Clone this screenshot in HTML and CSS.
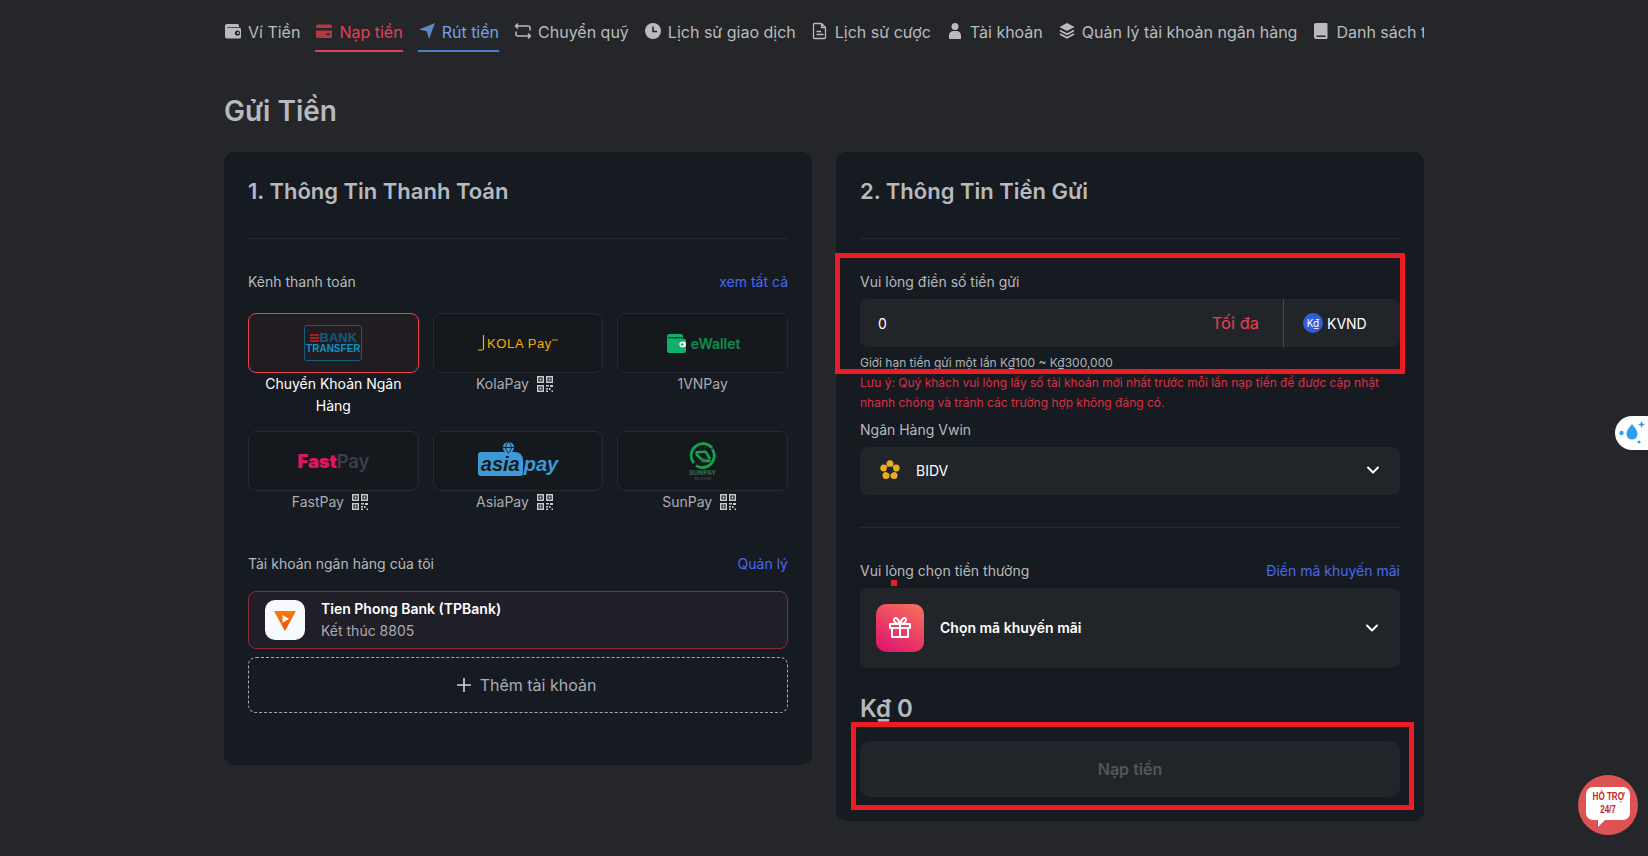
FILE: index.html
```html
<!DOCTYPE html>
<html lang="vi">
<head>
<meta charset="utf-8">
<title>Gửi Tiền</title>
<link rel="stylesheet" href="styles.css">
</head>
<body>
<svg class="defs" width="0" height="0" aria-hidden="true">
  <symbol id="qr" viewBox="0 0 16 16">
    <path fill="none" stroke="currentColor" stroke-width="1.4" d="M.7.7h5.6v5.6H.7zM9.7.7h5.6v5.6H9.7zM.7 9.7h5.6v5.6H.7z"/>
    <path fill="currentColor" d="M2.5 2.5h2v2h-2zM11.5 2.5h2v2h-2zM2.5 11.5h2v2h-2zM9 9h3v1.5H9zM13 9h3v2h-3zM9 12h2v1.5H9zM12 12h1.500v2H12zM9 14.500h2V16H9zM14.500 14.500H16V16h-1.500z"/>
  </symbol>
  <symbol id="chev" viewBox="0 0 14 14">
    <path fill="none" stroke="currentColor" stroke-width="2" stroke-linecap="round" stroke-linejoin="round" d="M2 4.500l5 5 5-5"/>
  </symbol>
</svg>
<div class="page">
  <nav class="tabs">
    <a class="tab"><svg class="ti" viewBox="0 0 18 18"><path fill="currentColor" d="M3 2h10.500A1.500 1.500 0 0 1 15 3.500V5H3.200v.8H15.500A1.500 1.500 0 0 1 17 7.300V15a1.500 1.500 0 0 1-1.500 1.500H3A2 2 0 0 1 1 14.500V4a2 2 0 0 1 2-2z"/><circle cx="13.500" cy="11" r="2.600" fill="#25262a"/><circle cx="14" cy="11" r="1.100" fill="currentColor"/></svg>Ví Tiền</a>
    <a class="tab tab-red"><svg class="ti" viewBox="0 0 18 18"><path fill="currentColor" opacity=".72" d="M2.500 2.500h13A1.500 1.500 0 0 1 17 4v10.500a1.500 1.500 0 0 1-1.500 1.500h-13A1.500 1.500 0 0 1 1 14.500V4a1.500 1.500 0 0 1 1.500-1.500zM1 6v2.500h16V6zm10 5.500V13h4v-1.500z" fill-rule="evenodd"/></svg>Nạp tiền</a>
    <a class="tab tab-blue"><svg class="ti" viewBox="0 0 18 18"><path fill="currentColor" opacity=".8" d="M17 1L11 17 8.800 9.200 1 7.500z"/></svg>Rút tiền</a>
    <a class="tab"><svg class="ti" viewBox="0 0 18 18"><path fill="none" stroke="currentColor" stroke-width="1.500" stroke-linejoin="round" d="M4 1.500L1.500 4 4 6.500M1.500 4H14a2 2 0 0 1 2 2v2.500M14 16.500l2.500-2.500L14 11.500M16.500 14H4a2 2 0 0 1-2-2V9.500"/></svg>Chuyển quỹ</a>
    <a class="tab"><svg class="ti" viewBox="0 0 18 18"><circle cx="9" cy="9" r="8" fill="currentColor"/><path fill="none" stroke="#25262a" stroke-width="1.600" d="M9 4.500V9.500H13"/></svg>Lịch sử giao dịch</a>
    <a class="tab"><svg class="ti" viewBox="0 0 18 18"><path fill="none" stroke="currentColor" stroke-width="1.300" stroke-linejoin="round" d="M3.500 1.500h7l4 4v10a1 1 0 0 1-1 1h-10a1 1 0 0 1-1-1v-13a1 1 0 0 1 1-1zM10.500 1.500v4h4M5.500 9.500H10M5.500 12.500h7"/></svg>Lịch sử cược</a>
    <a class="tab"><svg class="ti" viewBox="0 0 18 18"><circle cx="9" cy="4.500" r="3.500" fill="currentColor"/><path fill="currentColor" d="M3 17v-3.500A4.500 4.500 0 0 1 7.500 9h3a4.500 4.500 0 0 1 4.500 4.500V17z"/></svg>Tài khoản</a>
    <a class="tab"><svg class="ti" viewBox="0 0 18 18"><path fill="currentColor" d="M9 1l7.500 4L9 9 1.500 5z"/><path fill="none" stroke="currentColor" stroke-width="1.800" d="M2 8.500l7 3.800 7-3.800M2 12l7 3.800 7-3.800"/></svg>Quản lý tài khoản ngân hàng</a>
    <a class="tab"><svg class="ti" viewBox="0 0 18 18"><path fill="currentColor" fill-rule="evenodd" d="M4 1h10.500a1 1 0 0 1 1 1v14a1 1 0 0 1-1 1H4a2 2 0 0 1-2-2V3a2 2 0 0 1 2-2zM4.500 13.500V15H13.500v-1.500z"/></svg>Danh sách thẻ</a>
  </nav>

  <h1 class="title">Gửi Tiền</h1>

  <div class="columns">
    <section class="card card-left">
      <h2 class="card-title">1. Thông Tin Thanh Toán</h2>
      <div class="rule"></div>

      <div class="label-row channel-head">
        <span>Kênh thanh toán</span><a class="link">xem tất cả</a>
      </div>

      <div class="channels">
        <div class="channel active">
          <div class="tile">
            <div class="logo-bank">
              <div class="bank-top"><span class="bars"><i></i><i></i><i></i></span><span class="bank-word">BANK</span></div>
              <span class="bank-sub">TRANSFER</span>
            </div>
          </div>
          <div class="cap">Chuyển Khoản Ngân Hàng</div>
        </div>
        <div class="channel">
          <div class="tile logo-kola">
            <svg class="kola-j" viewBox="0 0 8 16"><path fill="none" stroke="#f5ad00" stroke-width="1.200" d="M5.500 0v13.500a1.500 1.500 0 0 1-1.500 1.500H0"/></svg>
            <span>KOLA Pay</span>
            <svg class="kola-t" viewBox="0 0 8 4"><path fill="none" stroke="#f5ad00" stroke-width="1.200" d="M0 2h8"/></svg>
          </div>
          <div class="cap">KolaPay<svg class="qr"><use href="#qr"/></svg></div>
        </div>
        <div class="channel">
          <div class="tile logo-wallet">
            <svg class="wallet-ic" viewBox="0 0 20 20"><path fill="#0fb16a" d="M3 0h11a3 3 0 0 1 3 3v2h1a2 2 0 0 1 2 2v10a3 3 0 0 1-3 3H3a3 3 0 0 1-3-3V3a3 3 0 0 1 3-3z"/><path fill="none" stroke="#14191c" stroke-width="1" d="M1 4h16"/><rect x="13" y="8" width="7" height="6" rx="3" fill="#e9fff4"/><circle cx="16" cy="11" r="1.300" fill="#0fb16a"/></svg>
            <span>eWallet</span>
          </div>
          <div class="cap">1VNPay</div>
        </div>
        <div class="channel">
          <div class="tile"><span class="logo-fast"><b>Fast</b><span>Pay</span></span></div>
          <div class="cap">FastPay<svg class="qr"><use href="#qr"/></svg></div>
        </div>
        <div class="channel">
          <div class="tile">
            <div class="logo-asia">
              <svg class="asia-globe" viewBox="0 0 14 14"><circle cx="7" cy="7" r="6" fill="#3e9ad6"/><path fill="none" stroke="#14191c" d="M1 7h12M7 1c-4 4-4 8 0 12M7 1c4 4 4 8 0 12"/></svg>
              <span class="asia-a">asia</span><span class="asia-b">pay</span>
            </div>
          </div>
          <div class="cap">AsiaPay<svg class="qr"><use href="#qr"/></svg></div>
        </div>
        <div class="channel">
          <div class="tile logo-sun">
            <svg class="sun-ic" viewBox="0 0 26 26"><path fill="none" stroke="#12a44a" stroke-width="2.600" d="M4.500 19.500A11 11 0 0 1 21.500 5.500M21.500 6.500A11 11 0 0 1 6.500 22"/><path fill="none" stroke="#12a44a" stroke-width="2.400" stroke-linecap="round" d="M7 9.500l6.500-.5a3 3 0 0 1 3 1.500l2.500 4.500M7 11.500l6 6h6"/><circle cx="13.500" cy="17" r="2" fill="#3d6b50"/></svg>
            <span class="sun-t">SUNPAY</span>
            <span class="sun-s">SOLUTIONS</span>
          </div>
          <div class="cap">SunPay<svg class="qr"><use href="#qr"/></svg></div>
        </div>
      </div>

      <div class="label-row bank-head">
        <span>Tài khoản ngân hàng của tôi</span><a class="link">Quản lý</a>
      </div>
      <div class="bank-row">
        <div class="bank-logo">
          <svg viewBox="0 0 24 24" width="24" height="24"><defs><linearGradient id="tp" x1="0" y1="0" x2="0" y2="1"><stop offset="0" stop-color="#ff7a00"/><stop offset="1" stop-color="#f04e0f"/></linearGradient></defs><path fill="url(#tp)" d="M1 3h22L12 23z"/><path fill="#fff" d="M9.500 7l6.500 3.800-6.500 4z"/></svg>
        </div>
        <div class="bank-text">
          <div class="bank-name">Tien Phong Bank (TPBank)</div>
          <div class="bank-num">Kết thúc 8805</div>
        </div>
      </div>
      <div class="add-row"><svg class="plus" viewBox="0 0 16 16"><path stroke="currentColor" stroke-width="1.600" d="M8 1v14M1 8h14"/></svg>Thêm tài khoản</div>
    </section>

    <section class="card card-right">
      <h2 class="card-title">2. Thông Tin Tiền Gửi</h2>
      <div class="rule"></div>

      <div class="label amount-label">Vui lòng điền số tiền gửi</div>
      <div class="amount">
        <span class="amount-val">0</span>
        <span class="amount-max">Tối đa</span>
        <span class="amount-cur"><span class="coin">K₫</span>KVND</span>
      </div>
      <div class="limit">Giới hạn tiền gửi một lần K₫100 ~ K₫300,000</div>
      <div class="note">Lưu ý: Quý khách vui lòng lấy số tài khoản mới nhất trước mỗi lần nạp tiền để được cập nhật nhanh chóng và tránh các trường hợp không đáng có.</div>

      <div class="label vwin-label">Ngân Hàng Vwin</div>
      <div class="select">
        <svg class="bidv" viewBox="0 0 20 20"><g fill="#e9ac1c"><circle cx="10" cy="3.800" r="3.500"/><circle cx="16.200" cy="8" r="3.500"/><circle cx="14" cy="15.500" r="3.500"/><circle cx="6" cy="15.500" r="3.500"/><circle cx="3.800" cy="8" r="3.500"/></g><circle cx="10" cy="10" r="3.600" fill="#212529"/></svg>
        <span class="select-t">BIDV</span>
        <svg class="chev"><use href="#chev"/></svg>
      </div>

      <div class="rule rule-mid"></div>

      <div class="label-row promo-head">
        <span>Vui lòng chọn tiền thưởng</span><a class="link">Điền mã khuyến mãi</a>
      </div>
      <div class="promo">
        <div class="gift">
          <svg viewBox="0 0 24 24" width="24" height="24"><path fill="none" stroke="#fff" stroke-width="2" stroke-linejoin="round" d="M2 8h20v4H2zM4 12v9h16v-9M12 8v13M4 12h16M12 8c-2 0-6-1-6-4 0-3 4-3 6 4 2-7 6-7 6-4 0 3-4 4-6 4z"/></svg>
        </div>
        <span class="promo-t">Chọn mã khuyến mãi</span>
        <svg class="chev"><use href="#chev"/></svg>
      </div>

      <div class="total">K₫ 0</div>
      <button class="submit" type="button">Nạp tiền</button>

      <div class="mark mark-amount"></div>
      <div class="mark mark-submit"></div>
      <div class="dot"></div>
    </section>
  </div>
</div>

<div class="side-btn">
  <svg viewBox="0 0 30 26" width="30" height="26"><g fill="#2a9df4"><path d="M15 4c3 4 5.500 6.500 5.500 10a5.500 5.500 0 0 1-11 0C9.500 10.500 12 8 15 4z"/><path d="M24.500 1l1 2.500L28 4.500l-2.500 1-1 2.500-1-2.500L21 4.500l2.500-1z"/><circle cx="4.500" cy="13" r="2.200"/><circle cx="22" cy="22" r="1.500"/></g></svg>
</div>
<div class="support">
  <div class="bubble"><span class="bubble-t">HỖ TRỢ<br>24/7</span></div>
</div>
</body>
</html>
```
FILE: styles.css
```css
* { box-sizing: border-box; }
html, body { margin: 0; height: 100%; }
body {
  background: #25262a;
  color: #b7b9bd;
  font-family: Inter, "Noto Sans", sans-serif;
  font-size: 14px;
  overflow: hidden;
  position: relative;
}
.defs { position: absolute; }
.page { width: 1200px; margin: 0 auto; }

.tabs {
  display: flex;
  gap: 15px;
  height: 52px;
  padding-top: 20px;
  overflow: hidden;
  white-space: nowrap;
  font-size: 16px;
}
.tab {
  display: flex;
  align-items: flex-start;
  gap: 6px;
  flex: none;
  height: 32px;
  line-height: 24px;
  color: #b9bbbe;
}
.ti { width: 18px; height: 18px; margin-top: 2px; flex: none; }
.tab-red { color: #e8404f; border-bottom: 2px solid #e8404f; }
.tab-blue { color: #6ea2ec; border-bottom: 2px solid #4a7fc9; }

.title {
  margin: 42px 0 24px;
  font-size: 28px;
  line-height: 34px;
  font-weight: 600;
  color: #b7b9bd;
}

.columns {
  display: grid;
  grid-template-columns: 588px 588px;
  gap: 24px;
  align-items: start;
}
.card {
  position: relative;
  background: #161b22;
  border-radius: 10px;
  padding: 24px;
}
.card-left { height: 613px; }
.card-right { height: 669px; }
.card-title {
  margin: 0;
  font-size: 22px;
  line-height: 30px;
  font-weight: 600;
  color: #b7b9bd;
}
.rule { height: 1px; background: #252a31; margin-top: 32px; }

.label-row {
  display: flex;
  justify-content: space-between;
  line-height: 20px;
}
.link { color: #4a68f0; }
.channel-head { margin-top: 33px; }

.channels {
  display: grid;
  grid-template-columns: repeat(3, 1fr);
  column-gap: 14px;
  row-gap: 14px;
  margin-top: 21px;
}
.tile {
  height: 60px;
  background: #15191e;
  border: 1px solid #262a31;
  border-radius: 8px;
  display: flex;
  align-items: center;
  justify-content: center;
}
.channel.active .tile { background: #201c22; border-color: #e8404f; }
.cap {
  text-align: center;
  line-height: 22px;
  padding: 0 10px;
  color: #a9acb1;
}
.channel.active .cap { color: #fff; }
.qr { width: 16px; height: 16px; margin: 0 7px 0 8px; vertical-align: -3px; color: #c9cbce; }

.logo-bank {
  width: 58px;
  height: 36px;
  border: 1px solid #0f5f7d;
  border-radius: 3px;
  display: flex;
  flex-direction: column;
  align-items: center;
  justify-content: center;
  font-family: "Liberation Sans", sans-serif;
  font-weight: 700;
  line-height: 1;
}
.bank-top { display: flex; align-items: center; gap: 1px; }
.bars { display: flex; flex-direction: column; gap: 1px; }
.bars i { display: block; width: 9px; height: 2px; background: #a81c26; }
.bank-word { font-size: 13px; line-height: 11px; color: #0d5c80; }
.bank-sub { font-size: 10px; line-height: 11px; color: #0a93c4; }

.logo-kola {
  gap: 0;
  font-family: "Liberation Sans", sans-serif;
  font-size: 13px;
  color: #f5ad00;
  letter-spacing: .6px;
  white-space: nowrap;
}
.kola-j { width: 8px; height: 16px; margin-right: 1px; }
.kola-t { width: 6px; height: 4px; margin-bottom: 7px; }

.logo-wallet { gap: 5px; color: #0a8f4b; font-weight: 600; font-size: 14px; padding-left: 2px; }
.wallet-ic { width: 19px; height: 19px; }

.logo-fast { font-family: Inter, sans-serif; font-weight: 700; font-size: 18.500px; letter-spacing: -.2px; }
.logo-fast b { color: #e0165e; }
.logo-fast span { color: #3a3f4c; font-weight: 600; }

.logo-asia {
  position: relative;
  display: flex;
  align-items: center;
  font-family: "Liberation Sans", sans-serif;
  font-weight: 700;
  font-style: italic;
  font-size: 20px;
  line-height: 24px;
  margin-top: 6px;
}
.asia-a { background: #3e9ad6; color: #14191c; padding: 0 3px; border-radius: 3px 8px 3px 3px; }
.asia-b { color: #3e9ad6; padding-left: 1px; }
.asia-globe { position: absolute; left: 24px; top: -11px; width: 13px; height: 13px; }

.logo-sun { flex-direction: column; gap: 0; }
.sun-ic { width: 28px; height: 28px; }
.sun-t { font-size: 6.500px; line-height: 7px; color: #3d6b50; font-weight: 700; }
.sun-s { font-size: 3px; line-height: 4px; color: #3d6b50; }

.bank-head { margin-top: 41px; align-items: center; height: 20px; }
.bank-row {
  display: flex;
  align-items: center;
  gap: 16px;
  height: 58px;
  margin-top: 17px;
  padding-left: 16px;
  background: #201f27;
  border: 1px solid #8a2a3c;
  border-radius: 8px;
}
.bank-logo {
  width: 40px;
  height: 40px;
  background: #f7fbff;
  border-radius: 10px;
  display: flex;
  align-items: center;
  justify-content: center;
}
.bank-name { color: #fff; font-weight: 600; line-height: 22px; }
.bank-num { color: #a9acb1; line-height: 22px; }
.add-row {
  display: flex;
  align-items: center;
  justify-content: center;
  gap: 8px;
  height: 56px;
  margin-top: 8px;
  padding-left: 16px;
  border: 1px dashed #a6a9ae;
  border-radius: 8px;
  font-size: 16px;
  color: #a9acb1;
}
.plus { width: 16px; height: 16px; color: #d0d2d5; }

.label { line-height: 20px; }
.amount-label { margin-top: 33px; }
.amount {
  display: flex;
  align-items: center;
  height: 48px;
  margin-top: 7px;
  background: #212529;
  border-radius: 8px;
}
.amount-val { flex: 1; padding-left: 18px; color: #fff; }
.amount-max { font-size: 16.500px; color: #e8404f; margin-right: 24px; }
.amount-cur {
  display: flex;
  align-items: center;
  gap: 4px;
  width: 117px;
  height: 100%;
  padding-left: 19px;
  border-left: 1px solid #44474c;
  color: #fff;
}
.coin {
  display: flex;
  align-items: center;
  justify-content: center;
  width: 20px;
  height: 20px;
  border-radius: 50%;
  background: #2f5fd8;
  font-size: 10px;
}
.limit { font-size: 12px; line-height: 16px; margin-top: 8px; color: #b0b3b7; }
.note { font-size: 12px; line-height: 20px; margin-top: 2px; color: #dc2f42; }
.vwin-label { margin-top: 7px; }
.select {
  display: flex;
  align-items: center;
  height: 48px;
  margin-top: 7px;
  padding: 0 20px 2px 20px;
  background: #212529;
  border-radius: 8px;
  color: #fff;
}
.bidv { width: 20px; height: 20px; margin-right: 16px; }
.select-t { flex: 1; }
.chev { width: 14px; height: 14px; color: #fff; }
.rule-mid { margin-top: 32px; }
.promo-head { margin-top: 33px; }
.promo {
  display: flex;
  align-items: center;
  height: 80px;
  margin-top: 7px;
  padding: 0 21px 0 16px;
  background: #212529;
  border-radius: 8px;
  color: #fff;
}
.gift {
  width: 48px;
  height: 48px;
  border-radius: 10px;
  margin-right: 16px;
  background: linear-gradient(30deg, #dc0f6c, #f8735c);
  display: flex;
  align-items: center;
  justify-content: center;
}
.promo-t { flex: 1; font-weight: 600; margin-bottom: 1px; }
.total {
  margin-top: 26px;
  font-size: 24px;
  line-height: 30px;
  font-weight: 600;
  color: #b7b9bd;
}
.submit {
  display: block;
  width: 100%;
  height: 56px;
  margin-top: 17px;
  border: 0;
  border-radius: 10px;
  background: #212529;
  color: #53565b;
  font-family: Inter, sans-serif;
  font-size: 16px;
  font-weight: 600;
}

.mark { position: absolute; border: 5px solid #ed1c24; pointer-events: none; }
.mark-amount { left: -1px; top: 101px; width: 570px; height: 121px; }
.mark-submit { left: 15px; top: 570px; width: 563px; height: 88px; }
.dot { position: absolute; left: 55px; top: 428px; width: 6px; height: 6px; background: #ed1c24; }

.side-btn {
  position: absolute;
  right: 0;
  top: 416px;
  width: 33px;
  height: 34px;
  padding-left: 2px;
  background: #fff;
  border-radius: 17px 0 0 17px;
  display: flex;
  align-items: center;
  overflow: hidden;
}
.support {
  position: absolute;
  left: 1578px;
  top: 775px;
  width: 60px;
  height: 60px;
  border-radius: 50%;
  background: #dd5252;
  display: flex;
  align-items: center;
  justify-content: center;
}
.bubble {
  position: relative;
  width: 44px;
  height: 33px;
  margin-top: -3px;
  padding-top: 3px;
  background: #fff;
  border-radius: 7px;
  color: #c8242b;
  font-family: "Liberation Sans", sans-serif;
  font-weight: 700;
  font-size: 11.500px;
  line-height: 13px;
  text-align: center;
}
.bubble-t { display: block; transform: scaleX(.7); white-space: nowrap; }
.bubble::after {
  content: "";
  position: absolute;
  left: 12px;
  bottom: -7px;
  border-right: 8px solid transparent;
  border-top: 8px solid #fff;
}
```
